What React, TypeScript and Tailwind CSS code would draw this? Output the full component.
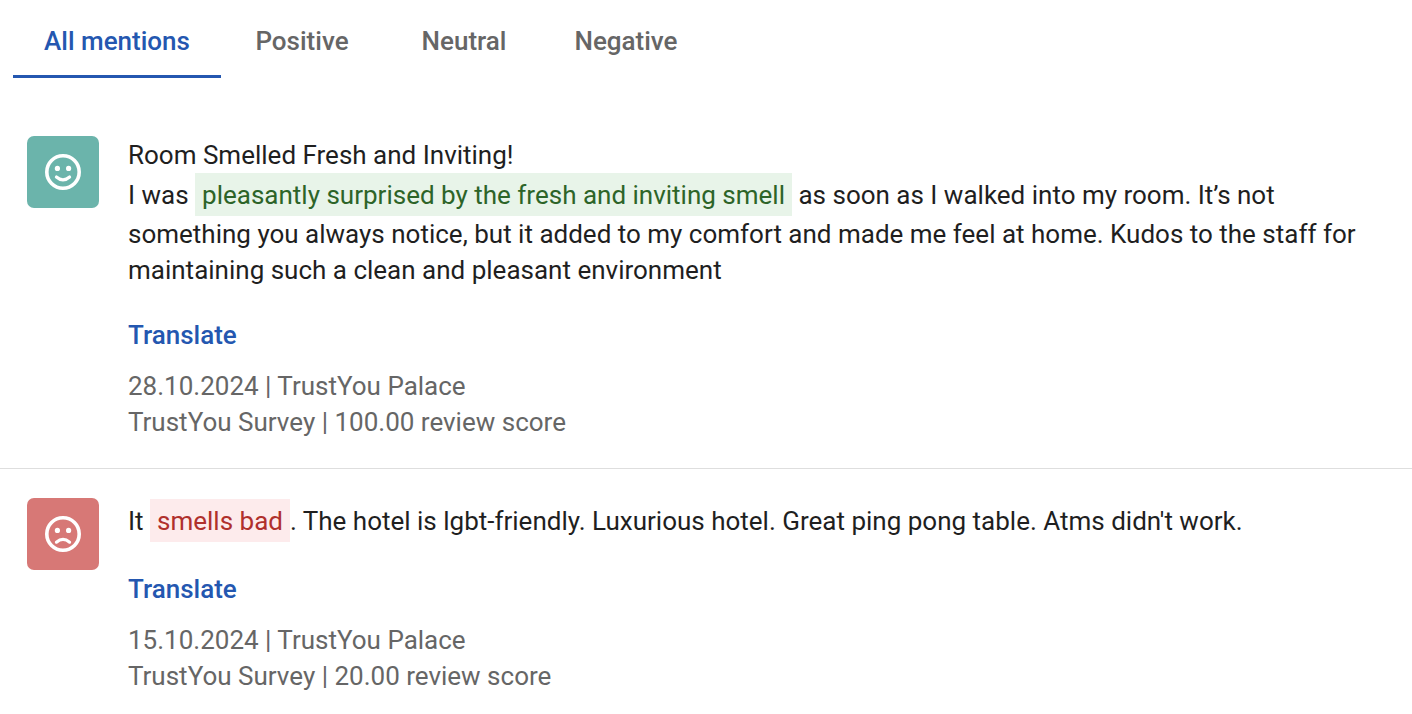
/**
 * App.tsx
 *
 * Review mentions panel. Shows a sentiment filter on top and
 * a list of guest reviews with the relevant phrase highlighted.
 */

import { useState } from "react";
import type { ReactNode } from "react";
import { clsx } from "clsx";

type Sentiment = "positive" | "negative";

interface Mention {
  id: number;
  sentiment: Sentiment;
  text: ReactNode;
  date: string;
  hotel: string;
  source: string;
  score: string;
}

const tabs = ["All mentions", "Positive", "Neutral", "Negative"];

/**
 * Highlighted phrase inside the review text
 */
const Highlight = ({ sentiment, children }: { sentiment: Sentiment; children: ReactNode }) => (
  <mark
    className={clsx(
      "inline-block px-[7px] pt-1 pb-[3px]",
      sentiment === "positive" ? "bg-[#e8f4e9] text-[#2d6428]" : "bg-[#fdebec] text-[#b0302c]"
    )}
  >
    {children}
  </mark>
);

const mentions: Mention[] = [
  {
    id: 1,
    sentiment: "positive",
    text: (
      <>
        Room Smelled Fresh and Inviting!
        <br />
        I was <Highlight sentiment="positive">pleasantly surprised by the fresh and inviting smell</Highlight> as soon
        as I walked into my room. It’s not something you always notice, but it added to my comfort and made me feel at
        home. Kudos to the staff for maintaining such a clean and pleasant environment
      </>
    ),
    date: "28.10.2024",
    hotel: "TrustYou Palace",
    source: "TrustYou Survey",
    score: "100.00",
  },
  {
    id: 2,
    sentiment: "negative",
    text: (
      <>
        It <Highlight sentiment="negative">smells bad</Highlight>. The hotel is lgbt-friendly. Luxurious hotel. Great
        ping pong table. Atms didn't work.
      </>
    ),
    date: "15.10.2024",
    hotel: "TrustYou Palace",
    source: "TrustYou Survey",
    score: "20.00",
  },
];

/**
 * Colored square with a happy or sad face
 */
const SentimentBadge = ({ sentiment }: { sentiment: Sentiment }) => (
  <div
    className={clsx(
      "flex size-[72px] shrink-0 items-center justify-center rounded-[7px] text-white",
      sentiment === "positive" ? "bg-[#6bb4ab]" : "bg-[#d77876]"
    )}
  >
    <svg viewBox="0 0 36 36" className="size-9" fill="none" role="img" aria-label={sentiment}>
      <circle cx="18" cy="18" r="16.2" stroke="currentColor" strokeWidth="3.6" />
      <circle cx="12.4" cy="14.4" r="2.6" fill="currentColor" />
      <circle cx="23.6" cy="14.4" r="2.6" fill="currentColor" />
      <path
        d={sentiment === "positive" ? "M11.4 23Q18 28.8 24.6 23" : "M11.4 26.2Q18 20.6 24.6 26.2"}
        stroke="currentColor"
        strokeWidth="3.1"
        strokeLinecap="round"
      />
    </svg>
  </div>
);

const MentionItem = ({ mention }: { mention: Mention }) => (
  <li className="flex gap-[29px] border-b border-[#dedede] pt-[29px] pr-14 pb-7 pl-[27px] last:border-b-0">
    <SentimentBadge sentiment={mention.sentiment} />
    <div className="min-w-0 flex-1 pt-px">
      <p>{mention.text}</p>
      <button type="button" className="mt-[29px] block font-medium text-[#2457b0]">
        Translate
      </button>
      <div className="mt-[15px] text-[#666666]">
        <p>
          {mention.date} | {mention.hotel}
        </p>
        <p>
          {mention.source} | {mention.score} review score
        </p>
      </div>
    </div>
  </li>
);

const App = () => {
  const [activeTab, setActiveTab] = useState(tabs[0]);

  // Neutral has no reviews yet, so its list stays empty
  const visible = mentions.filter((m) => activeTab === tabs[0] || m.sentiment === activeTab.toLowerCase());

  return (
    <main className="min-h-screen bg-white font-['Roboto',sans-serif] text-[26px] leading-9 text-[#1f1f1f]">
      <div role="tablist" className="mb-[29px] grid grid-cols-[208px_162px_162px_162px] pl-[13px]">
        {tabs.map((tab) => (
          <button
            key={tab}
            type="button"
            role="tab"
            aria-selected={tab === activeTab}
            onClick={() => setActiveTab(tab)}
            className={clsx(
              "border-b-3 pt-[23px] pb-4 text-center font-medium",
              tab === activeTab ? "border-[#2457b0] text-[#2457b0]" : "border-transparent text-[#666666]"
            )}
          >
            {tab}
          </button>
        ))}
      </div>

      <ul>
        {visible.map((mention) => (
          <MentionItem key={mention.id} mention={mention} />
        ))}
      </ul>
    </main>
  );
};

export default App;
